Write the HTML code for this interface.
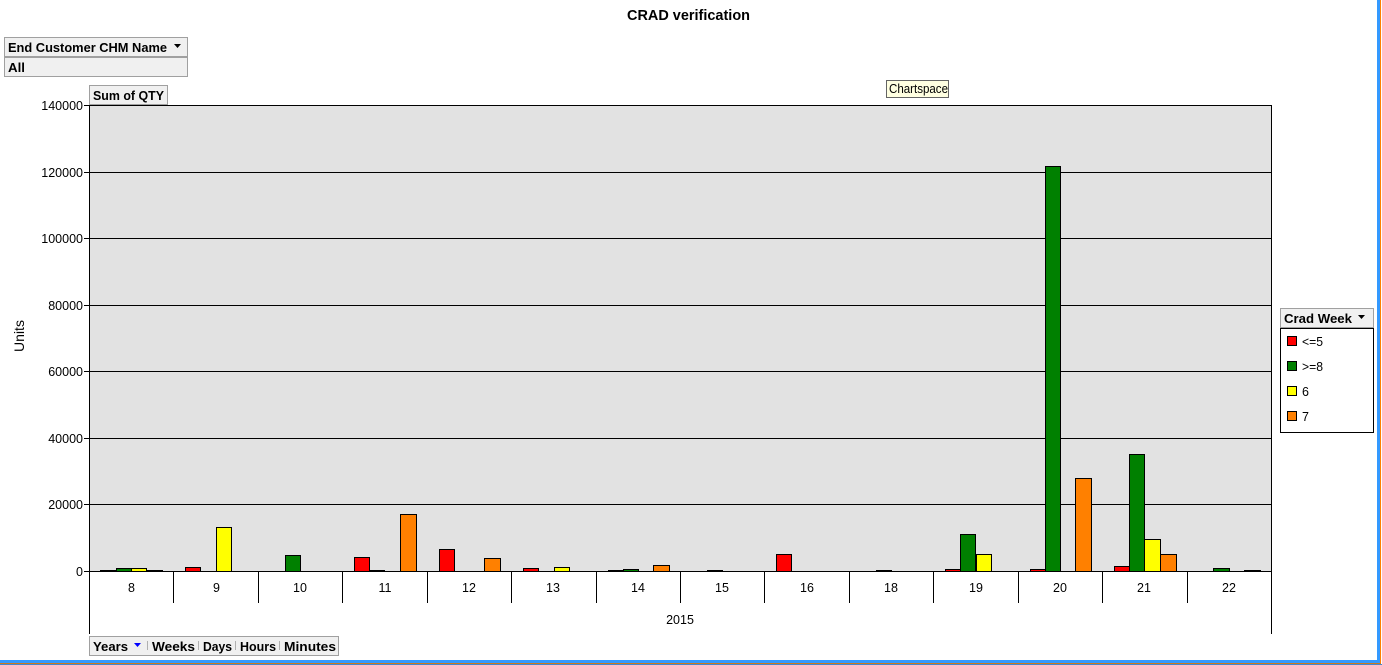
<!DOCTYPE html>
<html>
<head>
<meta charset="utf-8">
<title>CRAD verification</title>
<style>
html,body{margin:0;padding:0;background:#fff}
svg{display:block;font-family:"Liberation Sans",sans-serif}
text{fill:#000}
.t{font-size:12.5px}
.b{font-size:13px;font-weight:bold}
.e{text-anchor:end}
.m{text-anchor:middle}
</style>
</head>
<body>
<svg width="1382" height="665" viewBox="0 0 1382 665" xmlns="http://www.w3.org/2000/svg" shape-rendering="crispEdges">
<rect width="1382" height="665" fill="#fff"/>

<!-- plot -->
<rect x="89" y="105" width="1183" height="466" fill="#e2e2e2"/>
<g stroke="#000" stroke-width="1" fill="none">
<path d="M84 105.500H1272M84 172.500H1272M84 238.500H1272M84 305.500H1272M84 371.500H1272M84 438.500H1272M84 504.500H1272M84 571.500H1272"/>
<path d="M89.500 105V634M1271.500 105V634"/>
<path d="M173.500 571V603M258.500 571V603M342.500 571V603M427.500 571V603M511.500 571V603M596.500 571V603M680.500 571V603M764.500 571V603M849.500 571V603M933.500 571V603M1018.500 571V603M1102.500 571V603M1187.500 571V603"/>
</g>

<!-- bars -->
<g stroke="#000" stroke-width="1">
<g fill="#ff0000">
<rect x="100.500" y="570.500" width="15" height="1"/>
<rect x="185.500" y="567.500" width="15" height="4"/>
<rect x="354.500" y="557.500" width="15" height="14"/>
<rect x="439.500" y="549.500" width="15" height="22"/>
<rect x="523.500" y="568.500" width="15" height="3"/>
<rect x="608.500" y="570.500" width="15" height="1"/>
<rect x="776.500" y="554.500" width="15" height="17"/>
<rect x="945.500" y="569.500" width="15" height="2"/>
<rect x="1030.500" y="569.500" width="15" height="2"/>
<rect x="1114.500" y="566.500" width="15" height="5"/>
</g>
<g fill="#008000">
<rect x="116.500" y="568.500" width="15" height="3"/>
<rect x="285.500" y="555.500" width="15" height="16"/>
<rect x="369.500" y="570.500" width="15" height="1"/>
<rect x="623.500" y="569.500" width="15" height="2"/>
<rect x="707.500" y="570.500" width="15" height="1"/>
<rect x="876.500" y="570.500" width="15" height="1"/>
<rect x="960.500" y="534.500" width="15" height="37"/>
<rect x="1045.500" y="166.500" width="15" height="405"/>
<rect x="1129.500" y="454.500" width="15" height="117"/>
<rect x="1213.500" y="568.500" width="16" height="3"/>
</g>
<g fill="#ffff00">
<rect x="131.500" y="568.500" width="15" height="3"/>
<rect x="216.500" y="527.500" width="15" height="44"/>
<rect x="554.500" y="567.500" width="15" height="4"/>
<rect x="976.500" y="554.500" width="15" height="17"/>
<rect x="1144.500" y="539.500" width="16" height="32"/>
</g>
<g fill="#ff8000">
<rect x="147.500" y="570.500" width="15" height="1"/>
<rect x="400.500" y="514.500" width="16" height="57"/>
<rect x="484.500" y="558.500" width="16" height="13"/>
<rect x="653.500" y="565.500" width="16" height="6"/>
<rect x="1075.500" y="478.500" width="16" height="93"/>
<rect x="1160.500" y="554.500" width="16" height="17"/>
<rect x="1244.500" y="570.500" width="16" height="1"/>
</g>
</g>

<!-- y labels -->
<g class="t e">
<text class="t e" x="83" y="110">140000</text>
<text class="t e" x="83" y="177">120000</text>
<text class="t e" x="83" y="243">100000</text>
<text class="t e" x="83" y="310">80000</text>
<text class="t e" x="83" y="376">60000</text>
<text class="t e" x="83" y="443">40000</text>
<text class="t e" x="83" y="509">20000</text>
<text class="t e" x="83" y="576">0</text>
</g>
<text class="t m" transform="translate(24,336) rotate(-90)" x="0" y="0" style="font-size:14px">Units</text>

<!-- x labels -->
<text class="t m" x="131.500" y="592">8</text>
<text class="t m" x="216.500" y="592">9</text>
<text class="t m" x="300" y="592">10</text>
<text class="t m" x="385" y="592">11</text>
<text class="t m" x="469" y="592">12</text>
<text class="t m" x="553" y="592">13</text>
<text class="t m" x="638" y="592">14</text>
<text class="t m" x="722" y="592">15</text>
<text class="t m" x="807" y="592">16</text>
<text class="t m" x="891" y="592">18</text>
<text class="t m" x="976" y="592">19</text>
<text class="t m" x="1060" y="592">20</text>
<text class="t m" x="1144" y="592">21</text>
<text class="t m" x="1229" y="592">22</text>
<text class="t m" x="680" y="624">2015</text>

<!-- title -->
<text x="627" y="20" style="font-size:14.500px;font-weight:bold" textLength="123" lengthAdjust="spacingAndGlyphs">CRAD verification</text>

<!-- page filter -->
<rect x="4.500" y="37.500" width="183" height="19" fill="#f0f0f0" stroke="#a0a0a0"/>
<rect x="4.500" y="57.500" width="183" height="19" fill="#f0f0f0" stroke="#a0a0a0"/>
<text class="b" x="8" y="52" textLength="159" lengthAdjust="spacingAndGlyphs">End Customer CHM Name</text>
<path d="M174 44H181L177.500 48Z" fill="#000" shape-rendering="auto"/>
<text class="b" x="8" y="72" textLength="17" lengthAdjust="spacingAndGlyphs">All</text>

<!-- data field -->
<rect x="89.500" y="85.500" width="78" height="19" fill="#f0f0f0" stroke="#a0a0a0"/>
<text class="b" x="93" y="100" textLength="71" lengthAdjust="spacingAndGlyphs">Sum of QTY</text>

<!-- tooltip -->
<rect x="886.500" y="80.500" width="62" height="17" fill="#ffffe1" stroke="#646464"/>
<text x="889" y="93" style="font-size:12.500px" textLength="59" lengthAdjust="spacingAndGlyphs">Chartspace</text>

<!-- legend -->
<rect x="1280.500" y="308.500" width="93" height="19" fill="#f0f0f0" stroke="#a0a0a0"/>
<text class="b" x="1284" y="323" textLength="68" lengthAdjust="spacingAndGlyphs">Crad Week</text>
<path d="M1358 315H1365L1361.500 319Z" fill="#000" shape-rendering="auto"/>
<rect x="1280.500" y="328.500" width="93" height="104" fill="#fff" stroke="#000"/>
<rect x="1287.500" y="336.500" width="9" height="9" fill="#ff0000" stroke="#000"/>
<rect x="1287.500" y="361.500" width="9" height="9" fill="#008000" stroke="#000"/>
<rect x="1287.500" y="386.500" width="9" height="9" fill="#ffff00" stroke="#000"/>
<rect x="1287.500" y="411.500" width="9" height="9" fill="#ff8000" stroke="#000"/>
<text class="t" x="1302" y="346" textLength="21" lengthAdjust="spacingAndGlyphs">&lt;=5</text>
<text class="t" x="1302" y="371" textLength="21" lengthAdjust="spacingAndGlyphs">&gt;=8</text>
<text class="t" x="1302" y="396">6</text>
<text class="t" x="1302" y="421">7</text>

<!-- time bar -->
<rect x="89.500" y="636.500" width="249" height="19" fill="#f0f0f0" stroke="#a0a0a0"/>
<text class="b" x="93" y="651" textLength="35" lengthAdjust="spacingAndGlyphs">Years</text>
<path d="M134 643H141L137.500 647Z" fill="#0000ff" shape-rendering="auto"/>
<path d="M147.500 641V650M198.500 641V650M235.500 641V650M279.500 641V650" stroke="#b0b0b0"/>
<text class="b" x="152" y="651" textLength="43" lengthAdjust="spacingAndGlyphs">Weeks</text>
<text class="b" x="203" y="651" textLength="29" lengthAdjust="spacingAndGlyphs">Days</text>
<text class="b" x="240" y="651" textLength="36" lengthAdjust="spacingAndGlyphs">Hours</text>
<text class="b" x="284" y="651" textLength="52" lengthAdjust="spacingAndGlyphs">Minutes</text>

<!-- window border -->
<rect x="1377" y="0" width="3" height="664" fill="#3399ff"/>
<rect x="1380" y="0" width="1" height="664" fill="#ff8000"/>
<rect x="0" y="660" width="1380" height="3" fill="#3399ff"/>
<rect x="0" y="663" width="1381" height="1" fill="#c87a20"/>
<rect x="0" y="664" width="1382" height="1" fill="#4a86c8"/>
</svg>
</body>
</html>
